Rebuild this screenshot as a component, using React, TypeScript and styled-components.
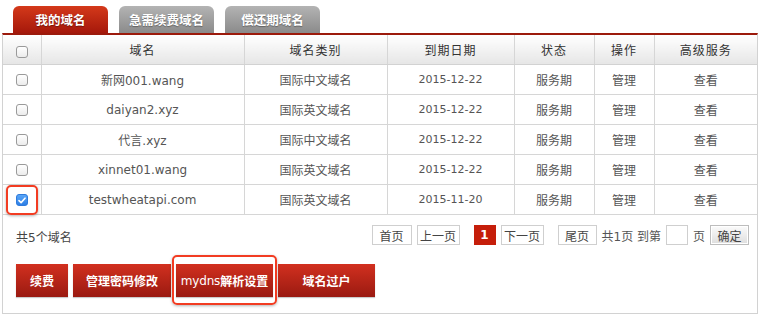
import React from 'react';
import styled, { createGlobalStyle } from 'styled-components';

type Domain = {
  name: string;
  kind: string;
  expires: string;
  checked?: boolean;
};

const domains: Domain[] = [
  { name: '新网001.wang', kind: '国际中文域名', expires: '2015-12-22' },
  { name: 'daiyan2.xyz', kind: '国际英文域名', expires: '2015-12-22' },
  { name: '代言.xyz', kind: '国际中文域名', expires: '2015-12-22' },
  { name: 'xinnet01.wang', kind: '国际英文域名', expires: '2015-12-22' },
  { name: 'testwheatapi.com', kind: '国际英文域名', expires: '2015-11-20', checked: true },
];

const GlobalStyle = createGlobalStyle`
  body {
    margin: 0;
    background: #fff;
    font-family: "DejaVu Sans", "Noto Sans CJK SC", sans-serif;
  }
`;

const highlightRing = (inset: string) => ({
  '&::after': {
    content: '""',
    position: 'absolute',
    inset,
    border: '2px solid #f23c22',
    borderRadius: '5px',
    boxShadow: '0 1px 3px rgba(0,0,0,.3)',
    pointerEvents: 'none',
  },
});

const Page = styled.div({
  width: '760px',
  height: '322px',
  boxSizing: 'border-box',
  paddingTop: '6px',
  paddingLeft: '2px',
});

const Tabs = styled.div({
  display: 'flex',
  gap: '11px',
  paddingLeft: '11px',
  height: '27px',
});

const Tab = styled.div<{ $active?: boolean }>(({ $active }) => ({
  width: '95px',
  height: '27px',
  borderRadius: '6px 6px 0 0',
  display: 'flex',
  alignItems: 'center',
  justifyContent: 'center',
  fontFamily: '"Noto Sans CJK SC", sans-serif',
  fontWeight: 'bold',
  fontSize: '12.5px',
  color: '#fff',
  textShadow: '0 1px 1px rgba(0,0,0,.35)',
  background: $active
    ? 'linear-gradient(#d4391a, #a5180b)'
    : 'linear-gradient(#b3b3b3, #8b8b8b)',
}));

const Panel = styled.div({
  width: '756px',
  boxSizing: 'border-box',
  borderTop: '2px solid #9c1a0c',
  borderLeft: '1px solid #d2d2d2',
  borderRight: '1px solid #d2d2d2',
  borderBottom: '1px solid #d2d2d2',
});

const Table = styled.table({
  width: '100%',
  borderCollapse: 'collapse',
  tableLayout: 'fixed',

  'th + th, td + td': {
    borderLeft: '1px solid #d6d6d6',
  },
});

const Th = styled.th({
  height: '29px',
  padding: 0,
  background: 'linear-gradient(#ffffff, #e6e6e6)',
  borderBottom: '1px solid #d2d2d2',
  fontFamily: '"Noto Sans CJK SC", sans-serif',
  fontWeight: 'normal',
  fontSize: '12px',
  letterSpacing: '1px',
  color: '#333',
});

const Td = styled.td<{ $date?: boolean }>(({ $date }) => ({
  height: '29px',
  padding: 0,
  borderBottom: '1px solid #d6d6d6',
  textAlign: 'center',
  fontSize: $date ? '11px' : '12px',
  color: '#555',
}));

const CheckCell = styled.span<{ $highlight?: boolean }>(({ $highlight }) => ({
  position: 'relative',
  display: 'inline-flex',
  verticalAlign: 'middle',
  ...($highlight && highlightRing('-9px -10px -9px -10px')),
}));

const Box = styled.span<{ $checked?: boolean }>(({ $checked }) => ({
  width: '12px',
  height: '12px',
  boxSizing: 'border-box',
  borderRadius: '3px',
  display: 'inline-flex',
  alignItems: 'center',
  justifyContent: 'center',
  border: $checked ? '1px solid #2f7bdc' : '1px solid #9a9a9a',
  background: $checked
    ? 'linear-gradient(#5aa6f7, #2d7fe6)'
    : 'linear-gradient(#ffffff, #ececec)',
}));

const Footer = styled.div({
  padding: '10px 8px 16px 13px',
});

const PagerRow = styled.div({
  display: 'flex',
  alignItems: 'center',
  justifyContent: 'space-between',
  height: '20px',
});

const Count = styled.span({
  fontSize: '12px',
  color: '#444',
  paddingTop: '2px',
});

const Pager = styled.div({
  display: 'flex',
  alignItems: 'center',
  gap: '14px',
});

const PagerGroup = styled.div({
  display: 'flex',
  alignItems: 'center',
  gap: '5px',
});

const PageBtn = styled.span<{ $w: number; $current?: boolean }>(
  ({ $w, $current }) => ({
    width: `${$w}px`,
    height: '20px',
    boxSizing: 'border-box',
    display: 'inline-flex',
    alignItems: 'center',
    justifyContent: 'center',
    fontSize: '12px',
    color: '#444',
    border: '1px solid #cfcfcf',
    background: '#fff',
    ...($current && {
      border: 'none',
      background: '#c51e0a',
      color: '#fff',
      fontWeight: 'bold',
    }),
  })
);

const PagerText = styled.span({
  fontSize: '12px',
  color: '#555',
  whiteSpace: 'pre',
});

const PageInput = styled.span({
  width: '22px',
  height: '20px',
  boxSizing: 'border-box',
  border: '1px solid #cfcfcf',
  background: '#fff',
});

const GoBtn = styled.span({
  width: '39px',
  height: '20px',
  boxSizing: 'border-box',
  display: 'inline-flex',
  alignItems: 'center',
  justifyContent: 'center',
  fontSize: '12px',
  color: '#444',
  border: '1px solid #bdbdbd',
  boxShadow: 'inset 0 0 0 1px #fff',
  background: 'linear-gradient(#fbfbfb, #dedede)',
});

const Actions = styled.div({
  display: 'flex',
  gap: '5px',
  marginTop: '19px',
});

const ActionBtn = styled.span<{ $w: number; $highlight?: boolean }>(
  ({ $w, $highlight }) => ({
    position: 'relative',
    width: `${$w}px`,
    height: '33px',
    display: 'inline-flex',
    alignItems: 'center',
    justifyContent: 'center',
    fontFamily: '"DejaVu Sans", "Noto Sans CJK SC", sans-serif',
    fontWeight: 'bold',
    fontSize: '12px',
    color: '#fff',
    background: 'linear-gradient(#d2301f, #9a1a11)',
    boxShadow: '0 1px 1px rgba(0,0,0,.2)',
    ...($highlight && highlightRing('-9px -4px -8px -4px')),
  })
);

const DnsLabel = styled.span({
  fontWeight: 'normal',
  letterSpacing: '-0.2px',
});

const cols = [38, 203, 143, 127, 80, 60];

function Check() {
  return (
    <svg width="8" height="7" viewBox="0 0 8 7">
      <path
        d="M1 3.6 L3.1 5.6 L7 1.2"
        fill="none"
        stroke="#fff"
        strokeWidth="1.6"
        strokeLinecap="round"
        strokeLinejoin="round"
      />
    </svg>
  );
}

function App() {
  return (
    <Page>
      <GlobalStyle />
      <Tabs>
        <Tab $active>我的域名</Tab>
        <Tab>急需续费域名</Tab>
        <Tab>偿还期域名</Tab>
      </Tabs>
      <Panel>
        <Table>
          <colgroup>
            {cols.map((w, i) => (
              <col key={i} style={{ width: w }} />
            ))}
            <col />
          </colgroup>
          <thead>
            <tr>
              <Th>
                <CheckCell>
                  <Box />
                </CheckCell>
              </Th>
              <Th>域名</Th>
              <Th>域名类别</Th>
              <Th>到期日期</Th>
              <Th>状态</Th>
              <Th>操作</Th>
              <Th>高级服务</Th>
            </tr>
          </thead>
          <tbody>
            {domains.map((d) => (
              <tr key={d.name}>
                <Td>
                  <CheckCell $highlight={d.checked}>
                    <Box $checked={d.checked}>{d.checked && <Check />}</Box>
                  </CheckCell>
                </Td>
                <Td>{d.name}</Td>
                <Td>{d.kind}</Td>
                <Td $date>{d.expires}</Td>
                <Td>服务期</Td>
                <Td>管理</Td>
                <Td>查看</Td>
              </tr>
            ))}
          </tbody>
        </Table>
        <Footer>
          <PagerRow>
            <Count>共5个域名</Count>
            <Pager>
              <PagerGroup>
                <PageBtn $w={40}>首页</PageBtn>
                <PageBtn $w={43}>上一页</PageBtn>
              </PagerGroup>
              <PagerGroup>
                <PageBtn $w={22} $current>
                  1
                </PageBtn>
                <PageBtn $w={43}>下一页</PageBtn>
              </PagerGroup>
              <PagerGroup>
                <PageBtn $w={39}>尾页</PageBtn>
                <PagerText>共1页 到第</PagerText>
                <PageInput />
                <PagerText>页</PagerText>
                <GoBtn>确定</GoBtn>
              </PagerGroup>
            </Pager>
          </PagerRow>
          <Actions>
            <ActionBtn $w={52}>续费</ActionBtn>
            <ActionBtn $w={98}>管理密码修改</ActionBtn>
            <ActionBtn $w={97} $highlight>
              <DnsLabel>mydns</DnsLabel>解析设置
            </ActionBtn>
            <ActionBtn $w={97}>域名过户</ActionBtn>
          </Actions>
        </Footer>
      </Panel>
    </Page>
  );
}

export default App;
